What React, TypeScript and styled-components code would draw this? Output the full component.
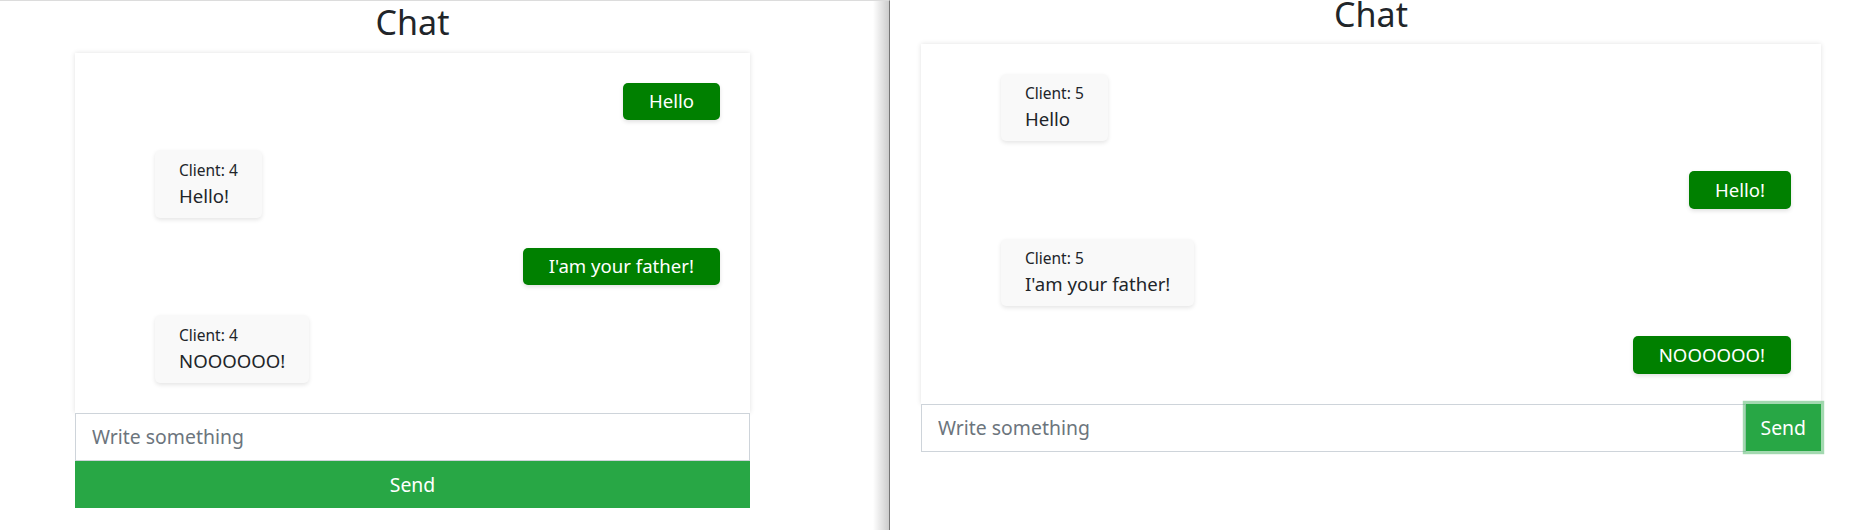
import React from "react";
import styled, { createGlobalStyle } from "styled-components";

const GlobalStyle = createGlobalStyle`
  html, body { margin: 0; padding: 0; background: #fff; }
  body {
    font-family: "Noto Sans", "Open Sans", sans-serif;
    color: #212529;
    -webkit-font-smoothing: antialiased;
  }
  * { box-sizing: border-box; }
`;

const Screen = styled.div`
  display: flex;
  width: 1852px;
  height: 530px;
  overflow: hidden;
`;

const LeftWindow = styled.section`
  width: 890px;
  flex: none;
  border-top: 1px solid #dcdcdc;
  border-right: 1px solid #767676;
  padding-left: 75px;
  background: linear-gradient(to left, rgba(0, 0, 0, 0.2), rgba(0, 0, 0, 0) 16px);
`;

const RightWindow = styled.section`
  flex: 1;
  padding-left: 31px;
  background: #fff;
`;

const Column = styled.div<{ $width: number }>`
  width: ${(p) => p.$width}px;
  display: flex;
  flex-direction: column;
`;

const Title = styled.h1<{ $compact?: boolean }>`
  margin: 0 0 ${(p) => (p.$compact ? 16 : 9)}px;
  font-weight: 400;
  font-size: 34px;
  line-height: ${(p) => (p.$compact ? 28 : 43)}px;
  text-align: center;
  color: #212529;
`;

const Card = styled.div`
  background: #fff;
  box-shadow: 0 0 5px rgba(0, 0, 0, 0.12);
  padding: 30px;
  display: flex;
  flex-direction: column;
  gap: 30px;
`;

const Received = styled.div`
  align-self: flex-start;
  margin-left: 50px;
  background: #f9f9f9;
  border-radius: 5px;
  box-shadow: 0 2px 4px rgba(0, 0, 0, 0.1);
  padding: 7.35px 24px;
`;

const Sender = styled.div`
  font-size: 15.5px;
  line-height: 24px;
`;

const ReceivedText = styled.div`
  font-size: 18.6px;
  line-height: 28.8px;
`;

const Sent = styled.div`
  align-self: flex-end;
  background: #008000;
  color: #fff;
  border-radius: 5px;
  box-shadow: 0 2px 4px rgba(0, 0, 0, 0.12);
  padding: 4.35px 26px;
  font-size: 18.6px;
  line-height: 28.8px;
`;

const Composer = styled.form<{ $inline?: boolean }>`
  display: flex;
  flex-direction: ${(p) => (p.$inline ? "row" : "column")};
  margin: 0;
`;

const TextInput = styled.input<{ $grow?: boolean }>`
  flex: ${(p) => (p.$grow ? "1 1 auto" : "none")};
  min-width: 0;
  height: 48px;
  padding: 8px 16px;
  font-family: "Noto Sans", "Open Sans", sans-serif;
  font-size: 19.4px;
  line-height: 1.5;
  color: #495057;
  background: #fff;
  border: 1px solid #ced4da;
  border-radius: 0;
  outline: none;
  &::placeholder { color: #6c757d; opacity: 1; }
`;

const SendButton = styled.button<{ $focused?: boolean }>`
  flex: none;
  height: 47px;
  padding: 0 14px;
  font-family: "Noto Sans", "Open Sans", sans-serif;
  font-size: 19.4px;
  line-height: 1.5;
  color: #fff;
  background: #28a745;
  border: 1px solid #28a745;
  border-radius: 0;
  box-shadow: ${(p) => (p.$focused ? "0 0 0 3.2px rgba(72, 180, 97, 0.5)" : "none")};
  cursor: pointer;
`;

type Msg = { mine: boolean; text: string; client?: number };

const leftMessages: Msg[] = [
  { mine: true, text: "Hello" },
  { mine: false, text: "Hello!", client: 4 },
  { mine: true, text: "I'am your father!" },
  { mine: false, text: "NOOOOOO!", client: 4 },
];

const rightMessages: Msg[] = [
  { mine: false, text: "Hello", client: 5 },
  { mine: true, text: "Hello!" },
  { mine: false, text: "I'am your father!", client: 5 },
  { mine: true, text: "NOOOOOO!" },
];

const Messages: React.FC<{ items: Msg[] }> = ({ items }) => (
  <Card>
    {items.map((m, i) =>
      m.mine ? (
        <Sent key={i}>{m.text}</Sent>
      ) : (
        <Received key={i}>
          <Sender>Client: {m.client}</Sender>
          <ReceivedText>{m.text}</ReceivedText>
        </Received>
      )
    )}
  </Card>
);

export default function App() {
  return (
    <>
      <GlobalStyle />
      <Screen>
        <LeftWindow>
          <Column $width={675}>
            <Title>Chat</Title>
            <Messages items={leftMessages} />
            <Composer onSubmit={(e) => e.preventDefault()}>
              <TextInput placeholder="Write something" />
              <SendButton type="submit">Send</SendButton>
            </Composer>
          </Column>
        </LeftWindow>
        <RightWindow>
          <Column $width={900}>
            <Title $compact>Chat</Title>
            <Messages items={rightMessages} />
            <Composer $inline onSubmit={(e) => e.preventDefault()}>
              <TextInput $grow placeholder="Write something" />
              <SendButton type="submit" $focused>
                Send
              </SendButton>
            </Composer>
          </Column>
        </RightWindow>
      </Screen>
    </>
  );
}
